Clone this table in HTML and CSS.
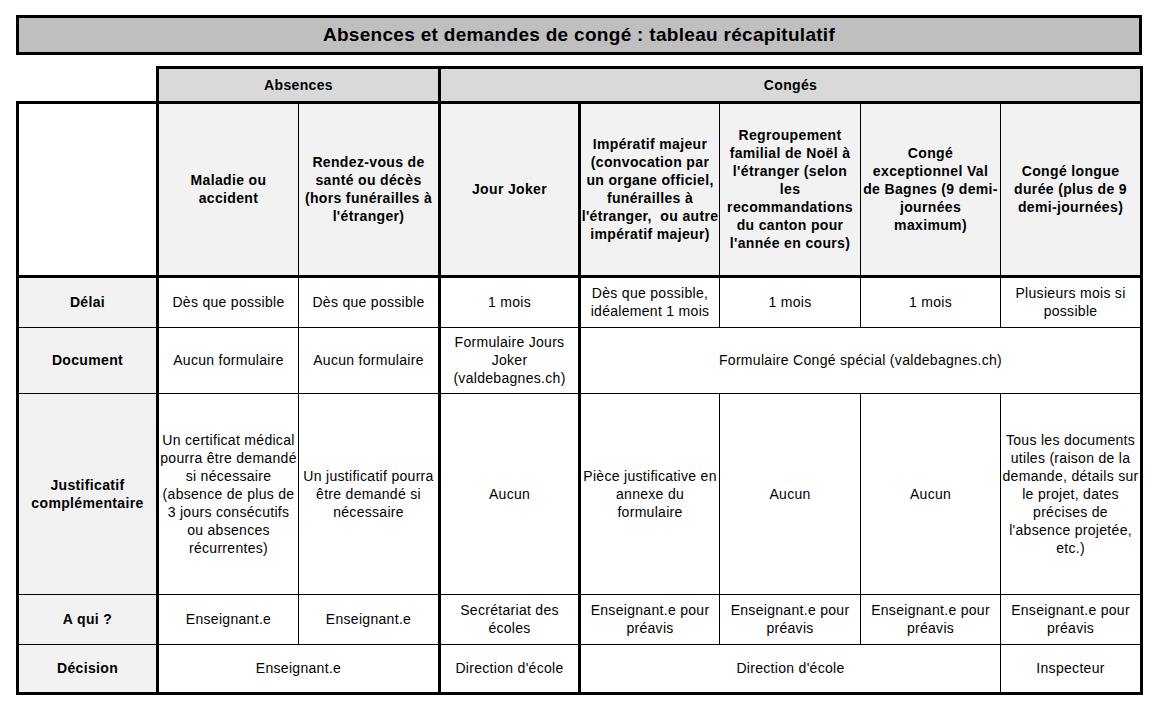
FILE: index.html
```html
<!DOCTYPE html>
<html lang="fr">
<head>
<meta charset="utf-8">
<title>Absences et demandes de congé</title>
<link rel="stylesheet" href="styles.css">
</head>
<body>
<div class="page">
  <div class="title">Absences et demandes de congé : tableau récapitulatif</div>
  <table class="recap">
    <colgroup>
      <col class="c-label">
      <col class="c1"><col class="c2"><col class="c3"><col class="c4"><col class="c5"><col class="c6"><col class="c7">
    </colgroup>
    <tr class="r-group">
      <td class="blank"></td>
      <th colspan="2" class="group tl">Absences</th>
      <th colspan="5" class="group tl">Congés</th>
    </tr>
    <tr class="r-head">
      <td class="corner"></td>
      <th class="head tl">Maladie ou<br>accident</th>
      <th class="head">Rendez-vous de<br>santé ou décès<br>(hors funérailles à<br>l'étranger)</th>
      <th class="head tl">Jour Joker</th>
      <th class="head tl">Impératif majeur<br>(convocation par<br>un organe officiel,<br>funérailles à<br>l'étranger,&nbsp; ou autre<br>impératif majeur)</th>
      <th class="head">Regroupement<br>familial de Noël à<br>l'étranger (selon<br>les<br>recommandations<br>du canton pour<br>l'année en cours)</th>
      <th class="head">Congé<br>exceptionnel Val<br>de Bagnes (9 demi-<br>journées<br>maximum)</th>
      <th class="head">Congé longue<br>durée (plus de 9<br>demi-journées)</th>
    </tr>
    <tr class="r-delai">
      <th class="label">Délai</th>
      <td class="tl">Dès que possible</td>
      <td>Dès que possible</td>
      <td class="tl">1 mois</td>
      <td class="tl">Dès que possible, idéalement 1 mois</td>
      <td>1 mois</td>
      <td>1 mois</td>
      <td>Plusieurs mois si possible</td>
    </tr>
    <tr class="r-doc">
      <th class="label">Document</th>
      <td class="tl">Aucun formulaire</td>
      <td>Aucun formulaire</td>
      <td class="tl">Formulaire Jours Joker (valdebagnes.ch)</td>
      <td colspan="4" class="tl">Formulaire Congé spécial (valdebagnes.ch)</td>
    </tr>
    <tr class="r-just">
      <th class="label">Justificatif complémentaire</th>
      <td class="tl">Un certificat médical pourra être demandé si nécessaire (absence de plus de 3 jours consécutifs ou absences récurrentes)</td>
      <td>Un justificatif pourra être demandé si nécessaire</td>
      <td class="tl">Aucun</td>
      <td class="tl">Pièce justificative en annexe du formulaire</td>
      <td>Aucun</td>
      <td>Aucun</td>
      <td>Tous les documents utiles (raison de la demande, détails sur le projet, dates précises de l'absence projetée, etc.)</td>
    </tr>
    <tr class="r-aqui">
      <th class="label">A qui ?</th>
      <td class="tl">Enseignant.e</td>
      <td>Enseignant.e</td>
      <td class="tl">Secrétariat des écoles</td>
      <td class="tl">Enseignant.e pour préavis</td>
      <td>Enseignant.e pour préavis</td>
      <td>Enseignant.e pour préavis</td>
      <td>Enseignant.e pour préavis</td>
    </tr>
    <tr class="r-dec">
      <th class="label">Décision</th>
      <td colspan="2" class="tl">Enseignant.e</td>
      <td class="tl">Direction d'école</td>
      <td colspan="3" class="tl">Direction d'école</td>
      <td>Inspecteur</td>
    </tr>
  </table>
</div>
</body>
</html>
```

FILE: styles.css
```css
html, body {
  margin: 0;
  padding: 0;
  background: #ffffff;
}

.page {
  padding: 15px 0 0 16px;
  width: 1126px;
  font-family: "Liberation Sans", Arial, sans-serif;
  color: #000000;
}

.title {
  box-sizing: border-box;
  width: 1126px;
  height: 40px;
  border: 3px solid #000000;
  background: #bfbfbf;
  font-weight: bold;
  font-size: 19px;
  letter-spacing: 0.3px;
  text-align: center;
  line-height: 34px;
}

.recap {
  margin-top: 11px;
  border-collapse: collapse;
  table-layout: fixed;
  width: 1126px;
  font-size: 14px;
  letter-spacing: 0.3px;
  line-height: 18px;
}

.c-label { width: 140px; }
.c1 { width: 141px; }
.c2 { width: 141px; }
.c3 { width: 140px; }
.c4 { width: 140px; }
.c5 { width: 141px; }
.c6 { width: 140px; }
.c7 { width: 141px; }

.recap td,
.recap th {
  border: 1px solid #000000;
  padding: 0 1px 1px;
  text-align: center;
  vertical-align: middle;
  overflow: hidden;
}

.recap th {
  font-weight: bold;
  letter-spacing: 0.35px;
}

.recap td {
  font-weight: normal;
}

.recap .tl {
  border-left: 3px solid #000000;
}

.recap td:last-child,
.recap th:last-child {
  border-right: 3px solid #000000;
}

.recap .blank {
  border: none;
  border-bottom: 3px solid #000000;
}

.recap .group {
  background: #d9d9d9;
  border-top: 3px solid #000000;
  border-bottom: 3px solid #000000;
}

.recap .head {
  background: #f2f2f2;
  border-bottom: 3px solid #000000;
  padding-left: 0;
  padding-right: 0;
}

.recap .corner {
  background: #ffffff;
  border-left: 3px solid #000000;
  border-bottom: 3px solid #000000;
}

.recap .label {
  background: #f2f2f2;
  border-left: 3px solid #000000;
}

.recap .r-dec td,
.recap .r-dec th {
  border-bottom: 3px solid #000000;
}

.r-group { height: 35px; }
.r-head { height: 174px; }
.r-delai { height: 51px; }
.r-doc { height: 66px; }
.r-just { height: 201px; }
.r-aqui { height: 50px; }
.r-dec { height: 49px; }
```
